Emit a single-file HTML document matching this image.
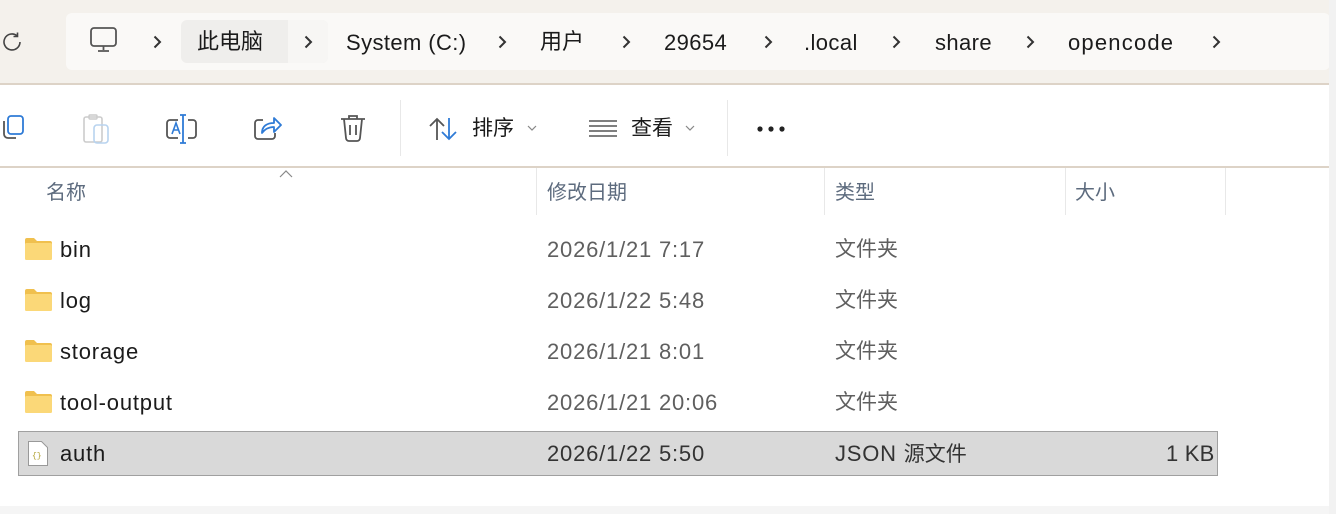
<!DOCTYPE html>
<html><head><meta charset="utf-8"><style>
body{margin:0;width:1336px;height:514px;overflow:hidden;background:#fff;font-family:"Liberation Sans","Noto Sans CJK SC",sans-serif;position:relative;color:#1b1b1b}
.a{position:absolute;white-space:nowrap}
.top{left:0;top:0;width:1336px;height:84px;background:#f4f1ec}
.bc{left:66px;top:13px;width:1264px;height:57px;background:#faf9f7;border-radius:6px}
.t22{font-size:22px;line-height:30px;letter-spacing:0.4px}
.row{font-size:22px;line-height:28px;letter-spacing:0.8px}
.cj{letter-spacing:0;font-size:21px}
.hd{font-size:20px;color:#5d6b7e}
.gray{color:#5f5f5f}
.sep{width:1px;background:#e8e8e8}
svg{position:absolute;overflow:visible}
</style></head><body>
<div class="a top"></div>
<div class="a bc"></div>
<div class="a" style="left:181px;top:20px;width:147px;height:43px;background:#efeeec;border-radius:6px"></div>
<div class="a" style="left:288px;top:20px;width:40px;height:43px;background:#f7f6f4;border-radius:0 6px 6px 0"></div>
<div class="a" style="left:0;top:83px;width:1329px;height:2px;background:#ddd3c7"></div>
<div class="a" style="left:1329px;top:0;width:7px;height:514px;background:#f2f2f2"></div>
<div class="a" style="left:0;top:506px;width:1329px;height:8px;background:#f5f5f5"></div>
<div class="a" style="left:0;top:166px;width:1329px;height:2px;background:#ddd3c7"></div>

<svg style="left:2px;top:31px" width="22" height="22" viewBox="0 0 22 22"><path d="M18 11a8 8 0 1 1-3-6.3" fill="none" stroke="#444" stroke-width="1.6"/><path d="M15.5 1.5v4h-4" fill="none" stroke="#444" stroke-width="1.6"/></svg>
<svg style="left:90px;top:27px" width="28" height="26" viewBox="0 0 28 26"><rect x="1" y="1" width="25" height="18" rx="3" fill="none" stroke="#555" stroke-width="1.8"/><path d="M13.5 19v4M8 24h11" stroke="#555" stroke-width="1.8"/></svg>

<svg style="left:153px;top:35px" width="9" height="14" viewBox="0 0 9 14"><path d="M1.5 1.5l5.5 5.5-5.5 5.5" fill="none" stroke="#333" stroke-width="2"/></svg>
<svg style="left:304px;top:35px" width="9" height="14" viewBox="0 0 9 14"><path d="M1.5 1.5l5.5 5.5-5.5 5.5" fill="none" stroke="#333" stroke-width="2"/></svg>
<svg style="left:498px;top:35px" width="9" height="14" viewBox="0 0 9 14"><path d="M1.5 1.5l5.5 5.5-5.5 5.5" fill="none" stroke="#333" stroke-width="2"/></svg>
<svg style="left:622px;top:35px" width="9" height="14" viewBox="0 0 9 14"><path d="M1.5 1.5l5.5 5.5-5.5 5.5" fill="none" stroke="#333" stroke-width="2"/></svg>
<svg style="left:764px;top:35px" width="9" height="14" viewBox="0 0 9 14"><path d="M1.5 1.5l5.5 5.5-5.5 5.5" fill="none" stroke="#333" stroke-width="2"/></svg>
<svg style="left:892px;top:35px" width="9" height="14" viewBox="0 0 9 14"><path d="M1.5 1.5l5.5 5.5-5.5 5.5" fill="none" stroke="#333" stroke-width="2"/></svg>
<svg style="left:1026px;top:35px" width="9" height="14" viewBox="0 0 9 14"><path d="M1.5 1.5l5.5 5.5-5.5 5.5" fill="none" stroke="#333" stroke-width="2"/></svg>
<svg style="left:1212px;top:35px" width="9" height="14" viewBox="0 0 9 14"><path d="M1.5 1.5l5.5 5.5-5.5 5.5" fill="none" stroke="#333" stroke-width="2"/></svg>

<div class="a t22" style="left:197px;top:27px;letter-spacing:0">此电脑</div>
<div class="a t22" style="left:346px;top:28px">System (C:)</div>
<div class="a t22" style="left:540px;top:27px;letter-spacing:0">用户</div>
<div class="a t22" style="left:664px;top:28px">29654</div>
<div class="a t22" style="left:804px;top:28px">.local</div>
<div class="a t22" style="left:935px;top:28px">share</div>
<div class="a t22" style="left:1068px;top:28px;letter-spacing:1.2px">opencode</div>

<svg style="left:0;top:116px" width="26" height="26" viewBox="0 0 26 26"><rect x="8" y="0" width="15" height="18" rx="3" fill="none" stroke="#2f7bd6" stroke-width="1.8"/><path d="M4 5v13a4 4 0 0 0 4 4h8" fill="none" stroke="#555" stroke-width="1.8"/></svg>
<svg style="left:83px;top:114px" width="28" height="30" viewBox="0 0 28 30"><rect x="1" y="3" width="18" height="25" rx="2" fill="none" stroke="#ccc" stroke-width="1.6"/><rect x="6" y="1" width="8" height="4" rx="1" fill="none" stroke="#ccc" stroke-width="1.4"/><rect x="11" y="11" width="14" height="18" rx="3" fill="none" stroke="#b8d3ef" stroke-width="1.6"/></svg>
<svg style="left:166px;top:114px" width="32" height="30" viewBox="0 0 32 30"><path d="M12 6H4a3 3 0 0 0-3 3v12a3 3 0 0 0 3 3h8M22 6h5a3 3 0 0 1 3 3v12a3 3 0 0 1-3 3h-5" fill="none" stroke="#555" stroke-width="1.8"/><path d="M17 1v28M14 1h6M14 29h6" stroke="#2f7bd6" stroke-width="1.8"/><path d="M6 20l4-11 4 11M7.5 16h5" fill="none" stroke="#2f7bd6" stroke-width="1.6"/></svg>
<svg style="left:253px;top:114px" width="30" height="28" viewBox="0 0 30 28"><path d="M10 6H5a3 3 0 0 0-3 3v13a3 3 0 0 0 3 3h14a3 3 0 0 0 3-3v-3" fill="none" stroke="#555" stroke-width="1.8"/><path d="M9 19c0-7 5-10 12-10V4l7 7-7 7v-5c-5 0-9 2-12 6z" fill="none" stroke="#2f7bd6" stroke-width="1.8" stroke-linejoin="round"/></svg>
<svg style="left:339px;top:114px" width="28" height="28" viewBox="0 0 28 28"><path d="M2 5h24M10 5V2h8v3M5 5l2 19a3 3 0 0 0 3 3h8a3 3 0 0 0 3-3l2-19M11 11v10M17 11v10" fill="none" stroke="#555" stroke-width="1.8"/></svg>
<div class="a sep" style="left:400px;top:100px;height:56px"></div>
<svg style="left:429px;top:117px" width="30" height="24" viewBox="0 0 30 24"><path d="M8 23V2M1 9l7-7 7 7" fill="none" stroke="#555" stroke-width="1.8"/><path d="M20 1v21M13 15l7 7 7-7" fill="none" stroke="#2f7bd6" stroke-width="1.8"/></svg>
<div class="a" style="left:472px;top:115px;font-size:21px;line-height:28px">排序</div>
<svg style="left:527px;top:125px" width="10" height="6" viewBox="0 0 10 6"><path d="M1 1l4 4 4-4" fill="none" stroke="#888" stroke-width="1.2"/></svg>
<svg style="left:589px;top:119px" width="28" height="18" viewBox="0 0 28 18"><path d="M0 2h28M0 7h28M0 12h28M0 17h28" stroke="#555" stroke-width="1.6"/></svg>
<div class="a" style="left:631px;top:115px;font-size:21px;line-height:28px">查看</div>
<svg style="left:685px;top:125px" width="10" height="6" viewBox="0 0 10 6"><path d="M1 1l4 4 4-4" fill="none" stroke="#888" stroke-width="1.2"/></svg>
<div class="a sep" style="left:727px;top:100px;height:56px"></div>
<svg style="left:757px;top:126px" width="30" height="6" viewBox="0 0 30 6"><circle cx="3" cy="3" r="2.6" fill="#222"/><circle cx="14" cy="3" r="2.6" fill="#222"/><circle cx="25" cy="3" r="2.6" fill="#222"/></svg>

<svg style="left:279px;top:170px" width="14" height="8" viewBox="0 0 14 8"><path d="M1 7l6-6 6 6" fill="none" stroke="#888" stroke-width="1.2"/></svg>
<div class="a hd" style="left:46px;top:176px">名称</div>
<div class="a hd" style="left:547px;top:176px">修改日期</div>
<div class="a hd" style="left:835px;top:176px">类型</div>
<div class="a hd" style="left:1075px;top:176px">大小</div>
<div class="a sep" style="left:536px;top:168px;height:47px"></div>
<div class="a sep" style="left:824px;top:168px;height:47px"></div>
<div class="a sep" style="left:1065px;top:168px;height:47px"></div>
<div class="a sep" style="left:1225px;top:168px;height:47px"></div>

<div class="a" style="left:18px;top:431px;width:1198px;height:43px;background:#d9d9d9;border:1px solid #a0a0a0"></div>

<svg style="left:25px;top:238px" width="27" height="22" viewBox="0 0 27 22"><path d="M0 2a2 2 0 0 1 2-2h7l3 3h13a2 2 0 0 1 2 2v15a2 2 0 0 1-2 2H2a2 2 0 0 1-2-2z" fill="#f0c04e"/><rect x="0" y="5" width="27" height="17" rx="1.5" fill="#fbd878"/></svg>
<svg style="left:25px;top:289px" width="27" height="22" viewBox="0 0 27 22"><path d="M0 2a2 2 0 0 1 2-2h7l3 3h13a2 2 0 0 1 2 2v15a2 2 0 0 1-2 2H2a2 2 0 0 1-2-2z" fill="#f0c04e"/><rect x="0" y="5" width="27" height="17" rx="1.5" fill="#fbd878"/></svg>
<svg style="left:25px;top:340px" width="27" height="22" viewBox="0 0 27 22"><path d="M0 2a2 2 0 0 1 2-2h7l3 3h13a2 2 0 0 1 2 2v15a2 2 0 0 1-2 2H2a2 2 0 0 1-2-2z" fill="#f0c04e"/><rect x="0" y="5" width="27" height="17" rx="1.5" fill="#fbd878"/></svg>
<svg style="left:25px;top:391px" width="27" height="22" viewBox="0 0 27 22"><path d="M0 2a2 2 0 0 1 2-2h7l3 3h13a2 2 0 0 1 2 2v15a2 2 0 0 1-2 2H2a2 2 0 0 1-2-2z" fill="#f0c04e"/><rect x="0" y="5" width="27" height="17" rx="1.5" fill="#fbd878"/></svg>
<svg style="left:28px;top:441px" width="20" height="25" viewBox="0 0 20 25"><path d="M0.5 0.5h13l6 6v18h-19z" fill="#fff" stroke="#999"/><text x="4" y="17" font-size="8" fill="#b0a030" font-family="Liberation Mono">{}</text></svg>

<div class="a row" style="left:60px;top:236px">bin</div>
<div class="a row gray" style="left:547px;top:236px">2026/1/21 7:17</div>
<div class="a row gray cj" style="left:835px;top:236px">文件夹</div>
<div class="a row" style="left:60px;top:287px">log</div>
<div class="a row gray" style="left:547px;top:287px">2026/1/22 5:48</div>
<div class="a row gray cj" style="left:835px;top:287px">文件夹</div>
<div class="a row" style="left:60px;top:338px">storage</div>
<div class="a row gray" style="left:547px;top:338px">2026/1/21 8:01</div>
<div class="a row gray cj" style="left:835px;top:338px">文件夹</div>
<div class="a row" style="left:60px;top:389px">tool-output</div>
<div class="a row gray" style="left:547px;top:389px">2026/1/21 20:06</div>
<div class="a row gray cj" style="left:835px;top:389px">文件夹</div>
<div class="a row" style="left:60px;top:440px">auth</div>
<div class="a row" style="left:547px;top:440px;color:#333">2026/1/22 5:50</div>
<div class="a row" style="left:835px;top:440px;color:#333">JSON <span style="letter-spacing:0;font-size:21px">源文件</span></div>
<div class="a row" style="left:1166px;top:440px;color:#333;letter-spacing:0.2px">1 KB</div>
</body></html>
